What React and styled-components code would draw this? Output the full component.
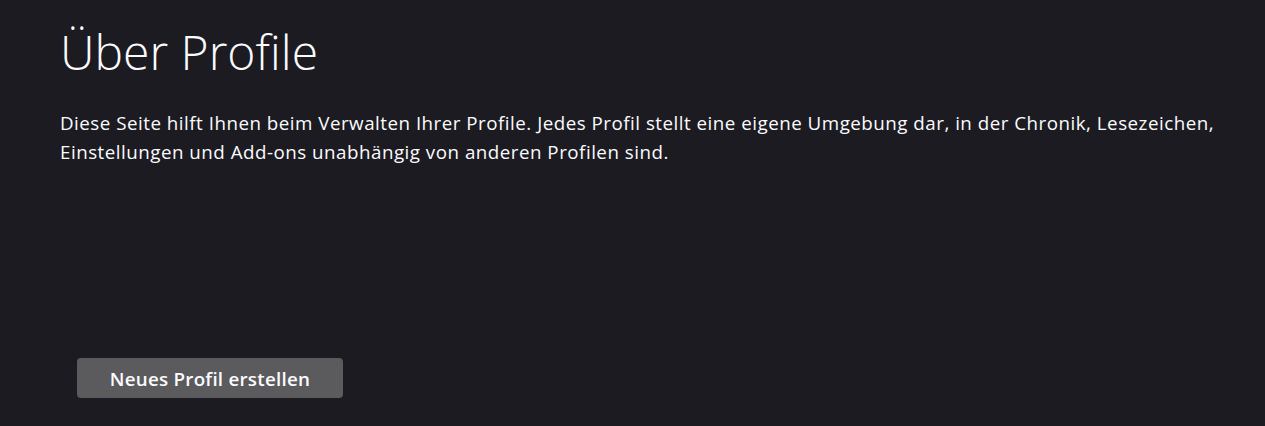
import React from "react";
import styled, { createGlobalStyle } from "styled-components";

const Global = createGlobalStyle`
  html, body { margin: 0; padding: 0; background: #1c1b22; }
  body { font-family: "Open Sans", "Noto Sans", sans-serif; color: #fbfbfe; }
`;

const Page = styled.main`
  box-sizing: border-box;
  width: 1265px;
  height: 426px;
  padding: 19px 40px 0 60px;
  display: flex;
  flex-direction: column;
`;

const Title = styled.h1`
  margin: 0;
  font-size: 48px;
  font-weight: 300;
  line-height: 65px;
`;

const Intro = styled.p`
  margin: 24px 0 0;
  font-size: 18.75px;
  line-height: 29px;
  letter-spacing: 0.5px;
  white-space: nowrap;
`;

const Actions = styled.div`
  margin-top: 192px;
  padding-left: 17px;
  display: flex;
`;

const Button = styled.button`
  height: 40px;
  width: 266px;
  border: none;
  border-radius: 4px;
  background: #5b5b5e;
  color: #fbfbfe;
  font-family: inherit;
  font-size: 18.75px;
  font-weight: 600;
  letter-spacing: 0.25px;
  padding: 0;
`;

export default function App() {
  return (
    <>
      <Global />
      <Page>
        <Title>Über Profile</Title>
        <Intro>
          Diese Seite hilft Ihnen beim Verwalten Ihrer Profile. Jedes Profil stellt eine eigene Umgebung dar, in der Chronik, Lesezeichen,
          <br />
          Einstellungen und Add-ons unabhängig von anderen Profilen sind.
        </Intro>
        <Actions>
          <Button>Neues Profil erstellen</Button>
        </Actions>
      </Page>
    </>
  );
}
